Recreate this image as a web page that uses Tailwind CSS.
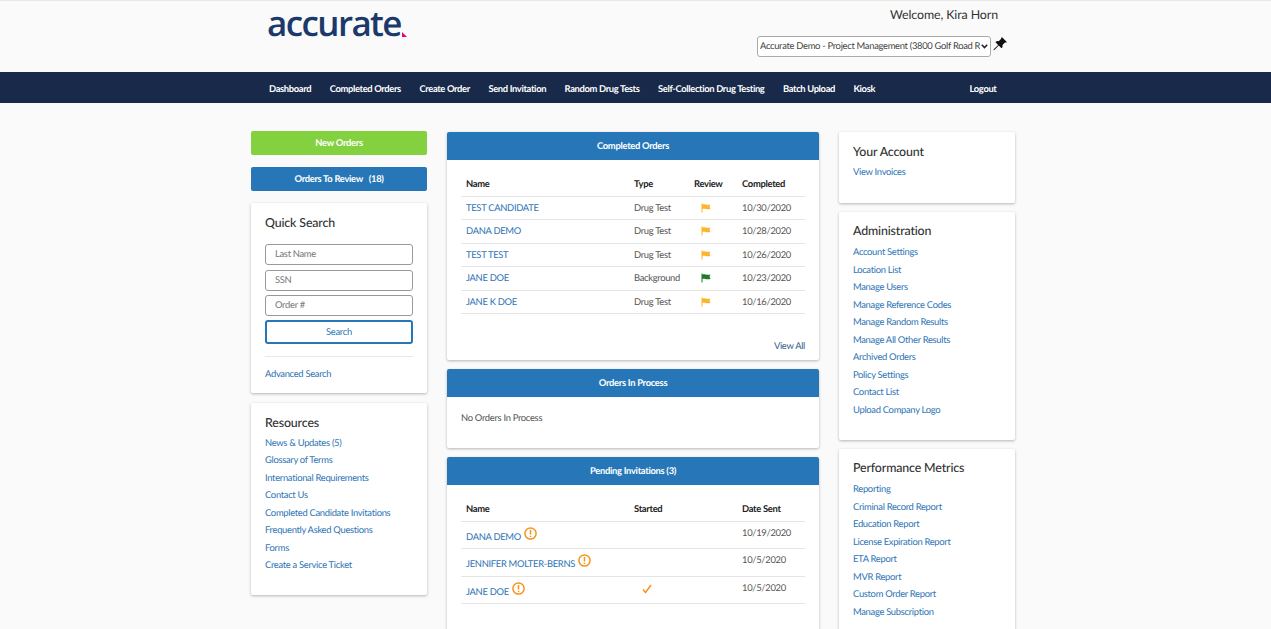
<!DOCTYPE html>
<html lang="en">
<head>
  <meta charset="UTF-8" />
  <title>Accurate Dashboard</title>
  <script src="https://cdn.jsdelivr.net/npm/@tailwindcss/browser@4"></script>
</head>
<body class="h-[629px] overflow-hidden bg-[#fafafa] font-['Lato',sans-serif] text-[9.400px] tracking-[-0.3px] text-[#555] [text-rendering:geometricPrecision]">

  <!-- Header -->
  <header class="h-[72px] border-t border-[#e8e8e8] flex">
    <div class="ml-[267px] w-[490px]">
      <div class="relative w-[142px] font-['Open_Sans',sans-serif] font-semibold text-[35px] leading-[46px] tracking-[-1.600px] text-[#1b3a6b]">accurate<svg class="absolute left-[135px] top-[31px]" width="5" height="5" viewBox="0 0 5 5"><path d="M0 0 L5 5 L0 5 Z" fill="#e6007e"/></svg></div>
    </div>
    <div class="w-[250px]">
      <div class="mt-[5px] h-[18px] text-right text-[12.400px] leading-[18px] tracking-[-0.1px] text-[#333] w-[241px]">Welcome, Kira Horn</div>
      <div class="mt-[12px] flex items-start">
        <div class="relative">
          <select class="block appearance-none w-[234px] h-[21px] bg-white border border-[#aaa] rounded-[3px] pl-[2px] pr-[10px] pt-[2px] text-[9.400px] tracking-[-0.3px] text-[#444] [text-rendering:geometricPrecision]">
            <option>Accurate Demo - Project Management (3800 Golf Road Rolling Meadows)</option>
          </select>
          <svg class="absolute right-[3px] top-[8px]" width="7" height="5" viewBox="0 0 7 5" fill="none"><path d="M0.800 0.800 L3.500 3.600 L6.200 0.800" stroke="#222" stroke-width="1.500"/></svg>
        </div>
        <svg class="ml-[2px] mt-[1px]" width="14" height="14" viewBox="0 0 16 16" fill="#111"><path d="M9.8.6a.6.6 0 0 1 .9-.1l4.8 4.8a.6.6 0 0 1-.2 1c-.5.2-1.100.1-1.600-.1L10.800 9.100c.3 1.100.2 2.300-.5 3.300a.6.6 0 0 1-.9.1L6.600 9.700 1.500 14.800l-.9.2.2-.9 5.100-5.100L3.100 6.200a.6.6 0 0 1 .1-.9c1-.7 2.200-.8 3.300-.5l2.900-2.900c-.2-.6-.3-1.100.4-1.300z"/></svg>
      </div>
    </div>
  </header>

  <!-- Nav -->
  <nav class="h-[31px] bg-[#18294a] pl-[269px] flex items-center gap-[18.500px] text-white text-[9.400px] font-bold tracking-[-0.35px] pt-[5px]">
    <a>Dashboard</a>
    <a>Completed Orders</a>
    <a>Create Order</a>
    <a>Send Invitation</a>
    <a>Random Drug Tests</a>
    <a>Self-Collection Drug Testing</a>
    <a>Batch Upload</a>
    <a>Kiosk</a>
    <a class="ml-[76px]">Logout</a>
  </nav>

  <!-- Columns -->
  <main class="pl-[251px] pt-[29px] flex gap-[20px] items-start">

    <!-- Left column -->
    <div class="w-[176px] flex flex-col mt-[-1px]">
      <button class="h-[24px] pt-[2px] rounded-[2px] bg-[#84d13f] text-white font-bold text-[9.400px] tracking-[-0.3px] [text-rendering:geometricPrecision]">New Orders</button>
      <button class="mt-[12px] h-[24px] pt-[2px] rounded-[2px] bg-[#2777b8] text-white font-bold text-[9.400px] tracking-[-0.3px] [text-rendering:geometricPrecision]">Orders To Review &nbsp; (18)</button>

      <section class="mt-[12px] h-[190px] bg-white rounded-[2px] shadow-[0_1px_3px_rgba(0,0,0,0.28)] px-[14px] pt-[12px]">
        <h2 class="text-[12.400px] leading-[16px] font-medium tracking-[-0.15px] text-[#333]">Quick Search</h2>
        <div class="mt-[13px] flex flex-col gap-[4.500px]">
          <input class="h-[21px] w-full border border-[#999] rounded-[3px] px-[9px] text-[9.400px] tracking-[-0.3px] placeholder-[#777] [text-rendering:geometricPrecision]" placeholder="Last Name" />
          <input class="h-[21px] w-full border border-[#999] rounded-[3px] px-[9px] text-[9.400px] tracking-[-0.3px] placeholder-[#777] [text-rendering:geometricPrecision]" placeholder="SSN" />
          <input class="h-[21px] w-full border border-[#999] rounded-[3px] px-[9px] text-[9.400px] tracking-[-0.3px] placeholder-[#777] [text-rendering:geometricPrecision]" placeholder="Order #" />
        </div>
        <button class="mt-[4px] w-full h-[24px] pt-[2px] border-2 border-[#2777b8] rounded-[3px] text-[#2777b8] text-[9.400px] tracking-[-0.3px] [text-rendering:geometricPrecision]">Search</button>
        <div class="mt-[12px] border-t border-[#e8e8e8] pt-[11px] text-[#2d74b5]">Advanced Search</div>
      </section>

      <section class="mt-[10px] h-[192px] bg-white rounded-[2px] shadow-[0_1px_3px_rgba(0,0,0,0.28)] px-[14px] pt-[12px]">
        <h2 class="text-[12.400px] leading-[16px] font-medium tracking-[-0.15px] text-[#333]">Resources</h2>
        <ul class="mt-[3.500px] text-[#2d74b5] leading-[17.500px]">
          <li>News &amp; Updates (5)</li>
          <li>Glossary of Terms</li>
          <li>International Requirements</li>
          <li>Contact Us</li>
          <li>Completed Candidate Invitations</li>
          <li>Frequently Asked Questions</li>
          <li>Forms</li>
          <li>Create a Service Ticket</li>
        </ul>
      </section>
    </div>

    <!-- Center column -->
    <div class="w-[372px] flex flex-col">
      <section class="h-[228px] bg-white rounded-[2px] shadow-[0_1px_3px_rgba(0,0,0,0.28)]">
        <div class="h-[28px] pt-[2px] bg-[#2777b8] rounded-t-[2px] text-white font-bold flex items-center justify-center">Completed Orders</div>
        <table class="mt-[14px] mx-[14px] w-[344px] table-fixed">
          <thead>
            <tr class="h-[22px] border-b border-[#e5e5e5] text-left text-[#222]"><th class="w-[173px] pt-[1px] pl-[5px] font-bold">Name</th><th class="w-[60px] pt-[1px] font-bold">Type</th><th class="w-[48px] pt-[1px] font-bold">Review</th><th class="pt-[1px] font-bold">Completed</th></tr>
          </thead>
          <tbody>
            <tr class="h-[23.500px] border-b border-[#e5e5e5]"><td class="pt-[2px] pl-[5px] text-[#2d74b5]">TEST CANDIDATE</td><td class="pt-[2px]">Drug Test</td><td class="pl-[7px]"><svg width="10" height="10" viewBox="0 0 10 10"><path d="M0.500 0.500 H1.500 V1.500 C3.500 0.500 5 2.500 9.500 1.500 L8.500 3.500 L9.500 6 C5 7 3.500 5 1.500 6 V9.500 H0.500 Z" fill="#fbb62b"/></svg></td><td class="pt-[2px]">10/30/2020</td></tr>
            <tr class="h-[23.500px] border-b border-[#e5e5e5]"><td class="pt-[2px] pl-[5px] text-[#2d74b5]">DANA DEMO</td><td class="pt-[2px]">Drug Test</td><td class="pl-[7px]"><svg width="10" height="10" viewBox="0 0 10 10"><path d="M0.500 0.500 H1.500 V1.500 C3.500 0.500 5 2.500 9.500 1.500 L8.500 3.500 L9.500 6 C5 7 3.500 5 1.500 6 V9.500 H0.500 Z" fill="#fbb62b"/></svg></td><td class="pt-[2px]">10/28/2020</td></tr>
            <tr class="h-[23.500px] border-b border-[#e5e5e5]"><td class="pt-[2px] pl-[5px] text-[#2d74b5]">TEST TEST</td><td class="pt-[2px]">Drug Test</td><td class="pl-[7px]"><svg width="10" height="10" viewBox="0 0 10 10"><path d="M0.500 0.500 H1.500 V1.500 C3.500 0.500 5 2.500 9.500 1.500 L8.500 3.500 L9.500 6 C5 7 3.500 5 1.500 6 V9.500 H0.500 Z" fill="#fbb62b"/></svg></td><td class="pt-[2px]">10/26/2020</td></tr>
            <tr class="h-[23.500px] border-b border-[#e5e5e5]"><td class="pt-[2px] pl-[5px] text-[#2d74b5]">JANE DOE</td><td class="pt-[2px]">Background</td><td class="pl-[7px]"><svg width="10" height="10" viewBox="0 0 10 10"><path d="M0.500 0.500 H1.500 V1.500 C3.500 0.500 5 2.500 9.500 1.500 L8.500 3.500 L9.500 6 C5 7 3.500 5 1.500 6 V9.500 H0.500 Z" fill="#1f7a2e"/></svg></td><td class="pt-[2px]">10/23/2020</td></tr>
            <tr class="h-[23.500px] border-b border-[#e5e5e5]"><td class="pt-[2px] pl-[5px] text-[#2d74b5]">JANE K DOE</td><td class="pt-[2px]">Drug Test</td><td class="pl-[7px]"><svg width="10" height="10" viewBox="0 0 10 10"><path d="M0.500 0.500 H1.500 V1.500 C3.500 0.500 5 2.500 9.500 1.500 L8.500 3.500 L9.500 6 C5 7 3.500 5 1.500 6 V9.500 H0.500 Z" fill="#fbb62b"/></svg></td><td class="pt-[2px]">10/16/2020</td></tr>
          </tbody>
        </table>
        <div class="mt-[26px] pr-[14px] text-right text-[#34608f]">View All</div>
      </section>

      <section class="mt-[9px] h-[79px] bg-white rounded-[2px] shadow-[0_1px_3px_rgba(0,0,0,0.28)]">
        <div class="h-[28px] pt-[2px] bg-[#2777b8] rounded-t-[2px] text-white font-bold flex items-center justify-center">Orders In Process</div>
        <p class="mt-[15px] pl-[14px]">No Orders In Process</p>
      </section>

      <section class="mt-[9px] h-[200px] bg-white rounded-[2px] shadow-[0_1px_3px_rgba(0,0,0,0.28)]">
        <div class="h-[28px] pt-[2px] bg-[#2777b8] rounded-t-[2px] text-white font-bold flex items-center justify-center">Pending Invitations (3)</div>
        <table class="mt-[14px] mx-[14px] w-[344px] table-fixed">
          <thead>
            <tr class="h-[22px] border-b border-[#e5e5e5] text-left text-[#222]"><th class="w-[173px] pl-[5px] font-bold">Name</th><th class="w-[108px] font-bold">Started</th><th class="font-bold">Date Sent</th></tr>
          </thead>
          <tbody>
            <tr class="h-[27.500px] border-b border-[#e5e5e5]"><td class="align-top pt-[9px] pl-[5px] text-[#2d74b5]"><span class="inline-flex items-start">DANA DEMO<svg class="ml-[3px] mt-[-4px]" width="13" height="13" viewBox="0 0 13 13" fill="none"><circle cx="6.500" cy="6.500" r="5.600" stroke="#f7941d" stroke-width="1.500"/><path d="M6.500 3 V7.500 M6.500 8.800 V10" stroke="#f7941d" stroke-width="1.500"/></svg></span></td><td></td><td class="align-top pt-[5px]">10/19/2020</td></tr>
            <tr class="h-[27.500px] border-b border-[#e5e5e5]"><td class="align-top pt-[9px] pl-[5px] text-[#2d74b5]"><span class="inline-flex items-start whitespace-nowrap">JENNIFER MOLTER-BERNS<svg class="ml-[3px] mt-[-4px]" width="13" height="13" viewBox="0 0 13 13" fill="none"><circle cx="6.500" cy="6.500" r="5.600" stroke="#f7941d" stroke-width="1.500"/><path d="M6.500 3 V7.500 M6.500 8.800 V10" stroke="#f7941d" stroke-width="1.500"/></svg></span></td><td></td><td class="align-top pt-[5px]">10/5/2020</td></tr>
            <tr class="h-[27.500px] border-b border-[#e5e5e5]"><td class="align-top pt-[9px] pl-[5px] text-[#2d74b5]"><span class="inline-flex items-start">JANE DOE<svg class="ml-[3px] mt-[-4px]" width="13" height="13" viewBox="0 0 13 13" fill="none"><circle cx="6.500" cy="6.500" r="5.600" stroke="#f7941d" stroke-width="1.500"/><path d="M6.500 3 V7.500 M6.500 8.800 V10" stroke="#f7941d" stroke-width="1.500"/></svg></span></td><td class="align-top pt-[7px] pl-[8px]"><svg width="10" height="10" viewBox="0 0 10 10" fill="none"><path d="M1 5.500 L3.500 8.500 L9 1" stroke="#f7941d" stroke-width="1.500"/></svg></td><td class="align-top pt-[5px]">10/5/2020</td></tr>
          </tbody>
        </table>
      </section>
    </div>

    <!-- Right column -->
    <div class="w-[176px] flex flex-col">
      <section class="h-[71px] bg-white rounded-[2px] shadow-[0_1px_3px_rgba(0,0,0,0.28)] px-[14px] pt-[12px]">
        <h2 class="text-[12.400px] leading-[16px] font-medium tracking-[-0.15px] text-[#333]">Your Account</h2>
        <div class="mt-[4px] leading-[17.500px] text-[#2d74b5]">View Invoices</div>
      </section>

      <section class="mt-[9px] h-[228px] bg-white rounded-[2px] shadow-[0_1px_3px_rgba(0,0,0,0.28)] px-[14px] pt-[11px]">
        <h2 class="text-[12.400px] leading-[16px] font-medium tracking-[-0.15px] text-[#333]">Administration</h2>
        <ul class="mt-[5px] text-[#2d74b5] leading-[17.500px]">
          <li>Account Settings</li>
          <li>Location List</li>
          <li>Manage Users</li>
          <li>Manage Reference Codes</li>
          <li>Manage Random Results</li>
          <li>Manage All Other Results</li>
          <li>Archived Orders</li>
          <li>Policy Settings</li>
          <li>Contact List</li>
          <li>Upload Company Logo</li>
        </ul>
      </section>

      <section class="mt-[9px] h-[200px] bg-white rounded-[2px] shadow-[0_1px_3px_rgba(0,0,0,0.28)] px-[14px] pt-[11px]">
        <h2 class="text-[12.400px] leading-[16px] font-medium tracking-[-0.15px] text-[#333]">Performance Metrics</h2>
        <ul class="mt-[5px] text-[#2d74b5] leading-[17.500px]">
          <li>Reporting</li>
          <li>Criminal Record Report</li>
          <li>Education Report</li>
          <li>License Expiration Report</li>
          <li>ETA Report</li>
          <li>MVR Report</li>
          <li>Custom Order Report</li>
          <li>Manage Subscription</li>
        </ul>
      </section>
    </div>
  </main>
</body>
</html>
